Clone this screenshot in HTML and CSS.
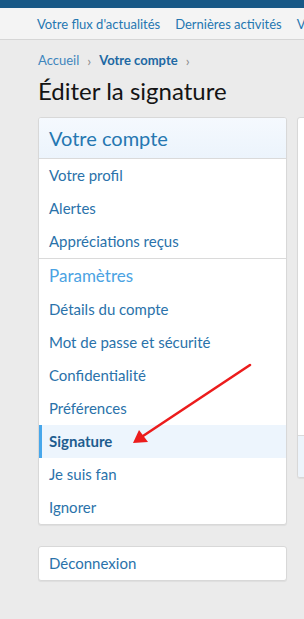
FILE: index.html
```html
<!DOCTYPE html>
<html lang="fr">
<head>
    <meta charset="UTF-8">
    <meta name="viewport" content="width=device-width, initial-scale=1.0">
    <title>Éditer la signature</title>
    <link rel="stylesheet" href="styles.css">
</head>
<body>
    <div class="top-bar"></div>
    <nav class="sub-nav">
        <a href="#">Votre flux d'actualités</a>
        <a href="#">Dernières activités</a>
        <a href="#">Vos contenus</a>
    </nav>

    <div class="page">
        <div class="breadcrumb">
            <a href="#">Accueil</a>
            <span class="sep">›</span>
            <a href="#" class="current">Votre compte</a>
            <span class="sep">›</span>
        </div>
        <h1>Éditer la signature</h1>

        <div class="columns">
            <div class="sidebar">
                <div class="block">
                    <h2 class="block-header">Votre compte</h2>
                    <div class="block-body">
                        <a href="#" class="block-link">Votre profil</a>
                        <a href="#" class="block-link">Alertes</a>
                        <a href="#" class="block-link">Appréciations reçus</a>
                    </div>
                    <div class="block-body">
                        <h3 class="block-minor">Paramètres</h3>
                        <a href="#" class="block-link">Détails du compte</a>
                        <a href="#" class="block-link">Mot de passe et sécurité</a>
                        <a href="#" class="block-link">Confidentialité</a>
                        <a href="#" class="block-link">Préférences</a>
                        <a href="#" class="block-link selected">Signature</a>
                        <a href="#" class="block-link">Je suis fan</a>
                        <a href="#" class="block-link">Ignorer</a>
                    </div>
                </div>

                <div class="block logout">
                    <a href="#" class="block-link">Déconnexion</a>
                </div>
            </div>

            <div class="main">
                <div class="block main-block">
                    <div class="main-body"></div>
                    <div class="main-footer"></div>
                </div>
            </div>
        </div>

        <!-- flèche d'annotation -->
        <svg class="arrow" width="304" height="619" viewBox="0 0 304 619">
            <line x1="250" y1="365" x2="143" y2="436" stroke="#ec1c1c" stroke-width="2.6" stroke-linecap="round"/>
            <polygon points="133,443 139,430 148,442" fill="#ec1c1c"/>
        </svg>
    </div>
</body>
</html>
```

FILE: styles.css
```css
html, body {
    margin: 0;
    padding: 0;
}
body {
    font-family: Lato, "Noto Sans", sans-serif;
    background: #ebebeb;
    overflow: hidden;
    width: 304px;
    height: 619px;
    position: relative;
}
a {
    text-decoration: none;
    color: #2577b1;
}
.top-bar {
    height: 8px;
    background: #185886;
}
.sub-nav {
    height: 31px;
    background: #f4f4f4;
    border-bottom: 1px solid #d6d6d6;
    display: flex;
    align-items: center;
    gap: 15px;
    padding-left: 37px;
    white-space: nowrap;
    font-size: 13px;
}
.page {
    padding: 11px 0 0 38px;
}
.breadcrumb {
    font-size: 13px;
    display: flex;
    align-items: center;
    gap: 8px;
    height: 18px;
    white-space: nowrap;
}
.breadcrumb a {
    color: #3e86bd;
}
.breadcrumb .current {
    font-weight: bold;
    color: #2068a3;
}
.breadcrumb .sep {
    color: #8a8a8a;
    font-size: 14px;
}
h1 {
    margin: 7px 0 0;
    font-size: 24px;
    font-weight: normal;
    color: #141414;
    line-height: 30px;
    height: 31px;
    white-space: nowrap;
}
.columns {
    display: flex;
    gap: 10px;
    margin-top: 10px;
    width: 560px;
}
.sidebar {
    width: 249px;
    flex-shrink: 0;
}
.block {
    background: #fff;
    border: 1px solid #d8d8d8;
    border-radius: 3px;
    box-shadow: 0 1px 1px rgba(0,0,0,0.06);
    overflow: hidden;
}
.block-header {
    margin: 0;
    height: 40px;
    line-height: 40px;
    padding: 0 10px;
    font-size: 20px;
    font-weight: normal;
    color: #2577b1;
    background: linear-gradient(to bottom, #f5f9fe, #ecf4fc);
    border-bottom: 1px solid #dadada;
}
.block-body + .block-body {
    border-top: 1px solid #dadada;
}
.block-link {
    display: block;
    padding: 0 10px;
    height: 33px;
    line-height: 33px;
    font-size: 15px;
    color: #2a72aa;
    white-space: nowrap;
}
.block-minor {
    margin: 0;
    padding: 0 10px;
    height: 34px;
    line-height: 34px;
    font-size: 17px;
    font-weight: normal;
    color: #4ba3e3;
}
.block-link.selected {
    background: #edf5fd;
    border-left: 3px solid #47a7eb;
    padding-left: 7px;
    font-weight: bold;
    color: #1f5d8f;
}
.logout {
    margin-top: 21px;
}
.main {
    flex: 1;
}
.main-body {
    height: 317px;
}
.main-footer {
    height: 41px;
    background: #edf4fb;
    border-top: 1px solid #dadada;
}
.arrow {
    position: absolute;
    left: 0;
    top: 0;
    pointer-events: none;
}
```
